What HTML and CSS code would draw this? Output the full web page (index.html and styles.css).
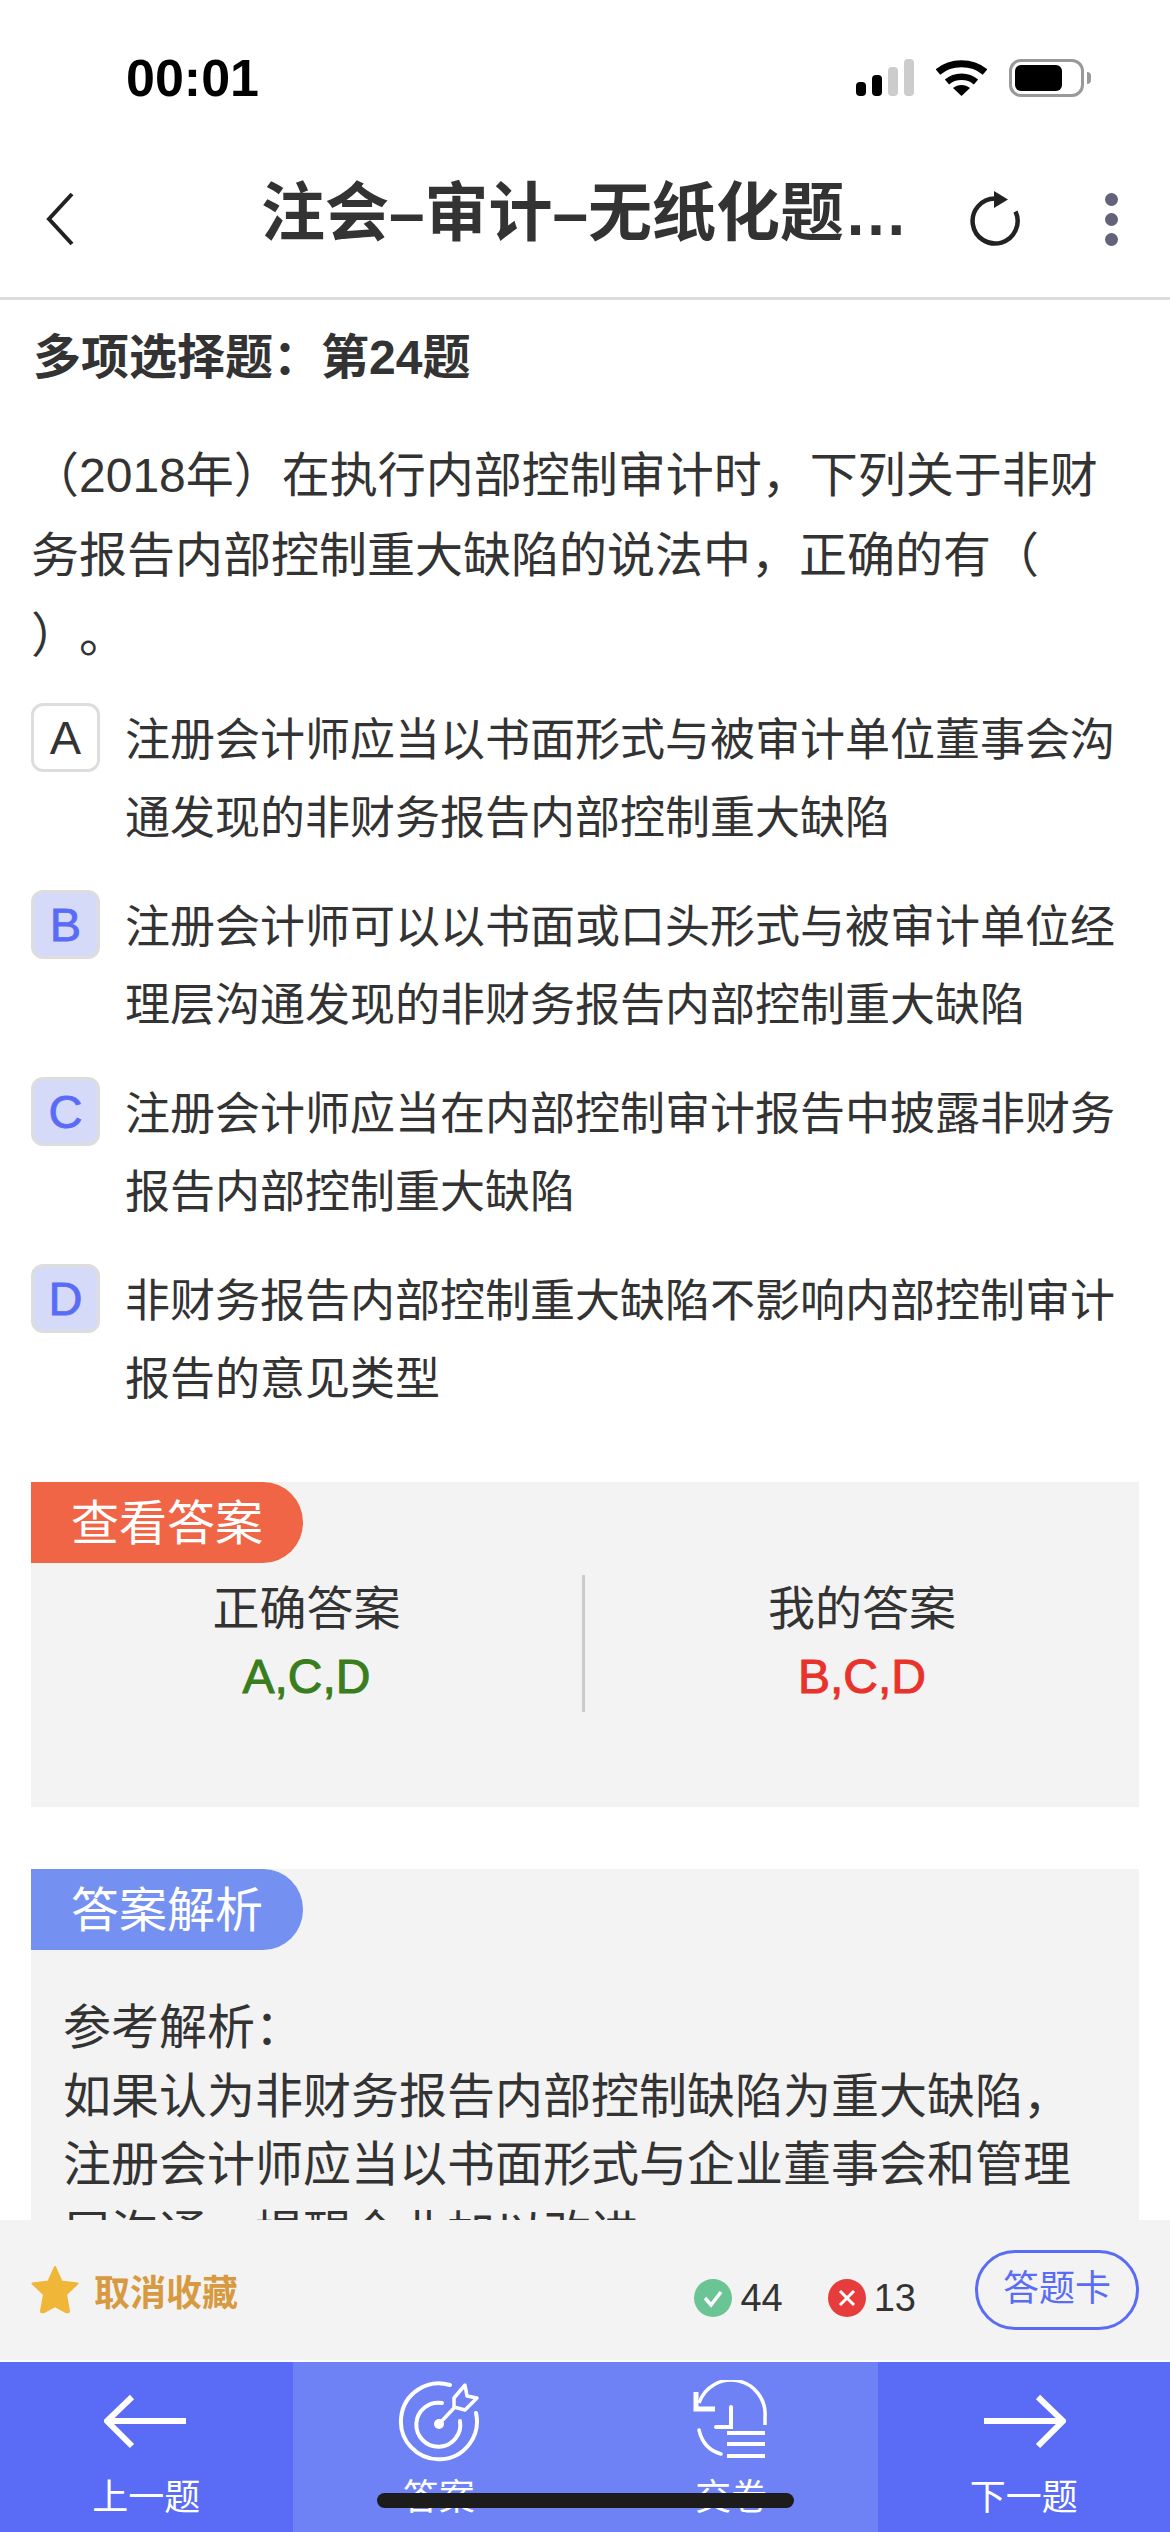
FILE: index.html
```html
<!DOCTYPE html>
<html lang="zh-CN">
<head>
    <meta charset="UTF-8">
    <meta name="viewport" content="width=device-width, initial-scale=1.0">
    <title>注会-审计-无纸化题库</title>
    <link rel="stylesheet" href="styles.css">
</head>
<body>
<div class="app">
    <div class="status-bar">
        <span class="time">00:01</span>
        <div class="status-icons">
            <svg width="58" height="37" viewBox="0 0 58 37">
                <rect x="0" y="23" width="10" height="14" rx="4" fill="#000"/>
                <rect x="16" y="16" width="10" height="21" rx="4" fill="#000"/>
                <rect x="32" y="8" width="10" height="29" rx="4" fill="#ccc"/>
                <rect x="48" y="0" width="10" height="37" rx="4" fill="#ccc"/>
            </svg>
            <svg width="51" height="37" viewBox="0 0 51 37">
                <path d="M2 13 C15 2 36 2 49 13" fill="none" stroke="#000" stroke-width="7"/>
                <path d="M11 23 C19 16 32 16 40 23" fill="none" stroke="#000" stroke-width="6.5"/>
                <path d="M17 29 C22 25 29 25 34 29 L25.500 37 Z" fill="#000"/>
            </svg>
            <div class="battery"><div class="battery-level"></div></div>
            <div class="battery-nub"></div>
        </div>
    </div>

    <div class="header">
        <svg class="back" width="30" height="54" viewBox="0 0 30 54">
            <path d="M27 2 L4 27 L27 52" fill="none" stroke="#222" stroke-width="4"/>
        </svg>
        <div class="title">注会–审计–无纸化题…</div>
        <div class="header-right">
            <svg width="52" height="56" viewBox="0 0 52 56">
                <path d="M26 7.500 A22.500 22.500 0 1 0 46.500 20.500" fill="none" stroke="#222" stroke-width="4.500"/>
                <path d="M25 0 L39 8.500 L25 17 Z" fill="#222"/>
            </svg>
            <div class="dots"><i></i><i></i><i></i></div>
        </div>
    </div>

    <div class="content">
        <div class="qtype">多项选择题：第24题</div>
        <div class="question">（2018年）在执行内部控制审计时，下列关于非财务报告内部控制重大缺陷的说法中，正确的有（<br>）。</div>

        <div class="option">
            <div class="letter">A</div>
            <div class="option-text">注册会计师应当以书面形式与被审计单位董事会沟通发现的非财务报告内部控制重大缺陷</div>
        </div>
        <div class="option">
            <div class="letter picked">B</div>
            <div class="option-text">注册会计师可以以书面或口头形式与被审计单位经理层沟通发现的非财务报告内部控制重大缺陷</div>
        </div>
        <div class="option">
            <div class="letter picked">C</div>
            <div class="option-text">注册会计师应当在内部控制审计报告中披露非财务报告内部控制重大缺陷</div>
        </div>
        <div class="option">
            <div class="letter picked">D</div>
            <div class="option-text">非财务报告内部控制重大缺陷不影响内部控制审计报告的意见类型</div>
        </div>

        <div class="panel answer-panel">
            <div class="pill pill-orange">查看答案</div>
            <div class="answers">
                <div class="answer">
                    <div>正确答案</div>
                    <div class="answer-value right">A,C,D</div>
                </div>
                <div class="answer">
                    <div>我的答案</div>
                    <div class="answer-value wrong">B,C,D</div>
                </div>
            </div>
        </div>

        <div class="panel">
            <div class="pill pill-blue">答案解析</div>
            <div class="analysis">参考解析：<br>如果认为非财务报告内部控制缺陷为重大缺陷，注册会计师应当以书面形式与企业董事会和管理层沟通，提醒企业加以改进。</div>
        </div>
    </div>

    <div class="toolbar">
        <svg width="48" height="48" viewBox="0 0 48 48">
            <path d="M24 1 L30.500 15.500 L46.500 17.500 L35 28.500 L38 45 Q38 47 35 46 L24 40 L13 46 Q10 47 10 45 L13 28.500 L1.500 17.500 L17.500 15.500 Z" fill="#f0b638" stroke="#f0b638" stroke-width="2" stroke-linejoin="round"/>
        </svg>
        <span class="fav">取消收藏</span>
        <div class="stats">
            <svg width="38" height="38" viewBox="0 0 38 38">
                <circle cx="19" cy="19" r="19" fill="#6bc493"/>
                <path d="M11 19 L17 26 L27 13" fill="none" stroke="#fff" stroke-width="3.500"/>
            </svg>
            <span class="count">44</span>
            <svg class="stat-wrong" width="38" height="38" viewBox="0 0 38 38">
                <circle cx="19" cy="19" r="19" fill="#e63c3c"/>
                <path d="M12 12 L26 26 M26 12 L12 26" fill="none" stroke="#fff" stroke-width="3"/>
            </svg>
            <span class="count">13</span>
        </div>
        <div class="card-btn">答题卡</div>
    </div>

    <div class="nav">
        <div class="nav-item">
            <svg width="84" height="84" viewBox="0 0 84 84">
                <path d="M2 41 H82 M28 17 L3 41 L28 66" fill="none" stroke="#fff" stroke-width="6"/>
            </svg>
            <span>上一题</span>
        </div>
        <div class="nav-item light">
            <svg width="84" height="84" viewBox="0 0 84 84">
                <path d="M53 5 A38 38 0 1 0 79 33" fill="none" stroke="#fff" stroke-width="4" stroke-linecap="round"/>
                <path d="M45 23 A22 22 0 1 0 63 41" fill="none" stroke="#fff" stroke-width="4" stroke-linecap="round"/>
                <circle cx="42" cy="44" r="5" fill="#fff"/>
                <path d="M42 44 L57 28 M57 18 L68 5 L70 16 L80 18 L68 30 L57 27 Z" fill="none" stroke="#fff" stroke-width="3.500" stroke-linejoin="round"/>
            </svg>
            <span>答案</span>
        </div>
        <div class="nav-item light">
            <svg width="84" height="84" viewBox="0 0 84 84">
                <path d="M10 22 A34 34 0 0 1 76 36 V44" fill="none" stroke="#fff" stroke-width="3.500" transform="translate(0 1)"/>
                <path d="M7 12 V29 H26" fill="none" stroke="#fff" stroke-width="5"/>
                <path d="M42 27 V47 H27" fill="none" stroke="#fff" stroke-width="4" stroke-linecap="round"/>
                <path d="M10 50 C13 63 21 71 32 74" fill="none" stroke="#fff" stroke-width="3.500" stroke-linecap="round"/>
                <path d="M38 53 H76 M38 64 H76 M38 76 H76" fill="none" stroke="#fff" stroke-width="4"/>
            </svg>
            <span>交卷</span>
        </div>
        <div class="nav-item">
            <svg width="84" height="84" viewBox="0 0 84 84">
                <path d="M2 41 H82 M56 17 L81 41 L56 66" fill="none" stroke="#fff" stroke-width="6"/>
            </svg>
            <span>下一题</span>
        </div>
    </div>

    <div class="home-bar"></div>
</div>
</body>
</html>
```

FILE: styles.css
```css
* {
    box-sizing: border-box;
}
html, body {
    margin: 0;
    padding: 0;
}
body {
    font-family: "Liberation Sans", "Noto Sans CJK SC", sans-serif;
    color: #333;
    background: #fff;
}
.app {
    position: relative;
    width: 1170px;
    height: 2532px;
    display: flex;
    flex-direction: column;
    overflow: hidden;
}

/* status bar */
.status-bar {
    height: 110px;
    padding: 51px 79px 0 126px;
    display: flex;
    justify-content: space-between;
    align-items: flex-start;
}
.time {
    font-size: 52px;
    line-height: 54px;
    font-weight: 700;
    color: #000;
}
.status-icons {
    display: flex;
    align-items: flex-start;
    margin-top: 8px;
}
.status-icons svg:first-child {
    margin: 0 22px 0 0;
}
.battery {
    width: 75px;
    height: 38px;
    margin-left: 22px;
    border: 3px solid #999;
    border-radius: 12px;
    padding: 3px;
}
.battery-level {
    width: 47px;
    height: 26px;
    background: #000;
    border-radius: 6px;
}
.battery-nub {
    width: 4px;
    height: 12px;
    margin: 13px 0 0 3px;
    background: #999;
    border-radius: 0 4px 4px 0;
}

/* header */
.header {
    height: 190px;
    padding: 31px 52px 0 51px;
    display: grid;
    grid-template-columns: 1fr auto 1fr;
    align-items: center;
    border-bottom: 3px solid #ddd;
}
.back {
    display: block;
    margin-left: -6px;
}
.title {
    margin-bottom: 24px;
    font-size: 64px;
    font-weight: 700;
    color: #333;
    white-space: nowrap;
}
.header-right {
    display: flex;
    justify-content: flex-end;
    align-items: center;
    gap: 84px;
}
.dots i {
    display: block;
    width: 13px;
    height: 13px;
    margin: 7px 0;
    background: #62627a;
    border-radius: 50%;
}

/* question */
.content {
    flex: 1;
    overflow: hidden;
}
.qtype {
    padding: 28px 33px 0;
    font-size: 48px;
    line-height: 60px;
    font-weight: 700;
}
.question {
    padding: 0 31px;
    margin-top: 48px;
    font-size: 48px;
    line-height: 80px;
    text-spacing-trim: space-all;
}
.option {
    display: flex;
    margin: 0 31px 32px;
    gap: 25px;
}
.question + .option {
    margin-top: 27px;
}
.letter {
    flex: none;
    width: 69px;
    height: 69px;
    border: 3px solid #ddd;
    border-radius: 12px;
    text-align: center;
    font-size: 47px;
    line-height: 63px;
    color: #333;
}
.letter.picked {
    background: #d5daf9;
    color: #5a6cf6;
    -webkit-text-stroke: 0.8px currentColor;
}
.option-text {
    flex: 1;
    font-size: 45px;
    line-height: 78px;
    margin-top: -1px;
}

/* panels */
.panel {
    margin: 0 31px 62px;
    background: #f3f3f3;
}
.answer-panel {
    height: 325px;
    margin-top: 63px;
}
.pill {
    width: 272px;
    height: 81px;
    border-radius: 0 40px 40px 0;
    padding-left: 40px;
    font-size: 48px;
    line-height: 83px;
    color: #fff;
}
.pill-orange {
    background: #f06545;
}
.pill-blue {
    background: #7490f0;
}
.answers {
    display: grid;
    grid-template-columns: 1fr 1fr;
    margin-top: 12px;
}
.answer {
    height: 137px;
    padding-top: 3px;
    text-align: center;
    font-size: 47px;
    line-height: 62px;
}
.answer:first-child {
    border-right: 3px solid #ccc;
}
.answer-value {
    margin-top: 2px;
    font-size: 48px;
    line-height: 70px;
    -webkit-text-stroke: 1px currentColor;
}
.right {
    color: #3a7d1c;
}
.wrong {
    color: #e8322a;
}
.analysis {
    padding: 44px 33px 0 32px;
    font-size: 48px;
    line-height: 68.5px;
}

/* bottom toolbar */
.toolbar {
    flex: none;
    height: 142px;
    background: #f3f3f3;
    border-bottom: 2px solid #fff;
    padding: 0 31px;
    display: flex;
    align-items: center;
}
.fav {
    margin-left: 15px;
    font-size: 36px;
    font-weight: 700;
    color: #d89a40;
}
.stats {
    margin-left: auto;
    display: flex;
    align-items: center;
    margin-top: 16px;
}
.stat-wrong {
    margin-left: 45px;
}
.count {
    margin-left: 8px;
    font-size: 38px;
    color: #333;
}
.card-btn {
    margin-left: 59px;
    width: 164px;
    height: 80px;
    border: 3px solid #5a6cf6;
    border-radius: 40px;
    text-align: center;
    font-size: 36px;
    line-height: 72px;
    color: #5a6cf6;
}

/* bottom nav */
.nav {
    flex: none;
    height: 170px;
    display: grid;
    grid-template-columns: repeat(4, 1fr);
    background: #5a6cf6;
}
.nav-item {
    padding-top: 18px;
    display: flex;
    flex-direction: column;
    align-items: center;
    font-size: 36px;
    line-height: 50px;
    color: #fff;
}
.nav-item.light {
    background: #6f82f5;
}
.nav-item svg {
    display: block;
    margin-bottom: 9px;
}
.home-bar {
    position: absolute;
    left: 377px;
    top: 2493px;
    width: 417px;
    height: 15px;
    background: #1c1c1c;
    border-radius: 8px;
}
```
